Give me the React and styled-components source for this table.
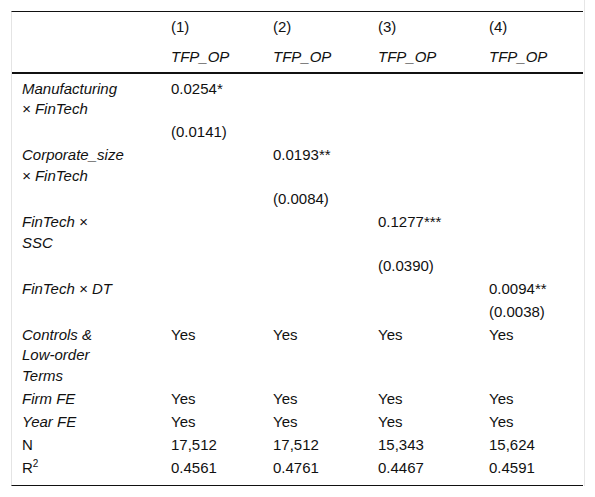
import React from 'react';
import styled, { createGlobalStyle } from 'styled-components';

const GlobalStyle = createGlobalStyle`
  html, body {
    margin: 0;
    padding: 0;
    background: #fff;
  }
  body {
    font-family: "Liberation Sans", Arial, sans-serif;
    color: #111;
  }
`;

const Frame = styled.div`
  box-sizing: border-box;
  width: 585px;
  height: 486px;
  padding: 11px 0 0 11px;
  border-right: 1px solid #e6e6e6;
`;

const Table = styled.table`
  width: 572px;
  table-layout: fixed;
  border-collapse: separate;
  border-spacing: 0;
  border-top: 1px solid #111;
  border-bottom: 1px solid #111;
  border-left: 1px solid #e4e4e4;
  font-size: 15px;
  line-height: 20.7px;
`;

const HeadCell = styled.th`
  text-align: left;
  font-weight: normal;
  font-style: ${(p) => (p.$italic ? 'italic' : 'normal')};
  padding: 4.65px 10px 4.65px 11px;
  border-bottom: ${(p) => (p.$rule ? '2px solid #111' : 'none')};
`;

const Cell = styled.td`
  vertical-align: top;
  text-align: left;
  font-style: ${(p) => (p.$italic ? 'italic' : 'normal')};
  padding: ${(p) => (p.$first ? '4.65px' : '1.15px')} 10px
    ${(p) => (p.$last ? '6.15px' : '1.15px')} ${(p) => (p.$label ? '10px' : '11px')};
  white-space: nowrap;
`;

const Sup = styled.sup`
  font-size: 10px;
  line-height: 0;
  vertical-align: 6px;
`;

const columns = [148, 102, 105, 111, 105];

const rows = [
  { label: ['Manufacturing', '× FinTech'], italic: true, values: ['0.0254*', '', '', ''] },
  { label: [''], values: ['(0.0141)', '', '', ''] },
  { label: ['Corporate_size', '× FinTech'], italic: true, values: ['', '0.0193**', '', ''] },
  { label: [''], values: ['', '(0.0084)', '', ''] },
  { label: ['FinTech ×', 'SSC'], italic: true, values: ['', '', '0.1277***', ''] },
  { label: [''], values: ['', '', '(0.0390)', ''] },
  { label: ['FinTech × DT'], italic: true, values: ['', '', '', '0.0094**'] },
  { label: [''], values: ['', '', '', '(0.0038)'] },
  { label: ['Controls &', 'Low-order', 'Terms'], italic: true, values: ['Yes', 'Yes', 'Yes', 'Yes'] },
  { label: ['Firm FE'], italic: true, values: ['Yes', 'Yes', 'Yes', 'Yes'] },
  { label: ['Year FE'], italic: true, values: ['Yes', 'Yes', 'Yes', 'Yes'] },
  { label: ['N'], values: ['17,512', '17,512', '15,343', '15,624'] },
  { label: ['R', <Sup key="s">2</Sup>], inline: true, values: ['0.4561', '0.4761', '0.4467', '0.4591'] },
];

const Label = ({ row }) => {
  if (row.inline) return <>{row.label}</>;
  return row.label.map((line, i) => (
    <React.Fragment key={i}>
      {i > 0 && <br />}
      {line}
    </React.Fragment>
  ));
};

const App = () => (
  <>
    <GlobalStyle />
    <Frame>
      <Table>
        <colgroup>
          {columns.map((w, i) => (
            <col key={i} style={{ width: w }} />
          ))}
        </colgroup>
        <thead>
          <tr>
            <HeadCell />
            {['(1)', '(2)', '(3)', '(4)'].map((h) => (
              <HeadCell key={h}>{h}</HeadCell>
            ))}
          </tr>
          <tr>
            <HeadCell $rule />
            {[1, 2, 3, 4].map((n) => (
              <HeadCell key={n} $rule $italic>
                TFP_OP
              </HeadCell>
            ))}
          </tr>
        </thead>
        <tbody>
          {rows.map((row, r) => {
            const first = r === 0;
            const last = r === rows.length - 1;
            return (
              <tr key={r}>
                <Cell $label $italic={row.italic} $first={first} $last={last}>
                  <Label row={row} />
                </Cell>
                {row.values.map((v, c) => (
                  <Cell key={c} $first={first} $last={last}>
                    {v}
                  </Cell>
                ))}
              </tr>
            );
          })}
        </tbody>
      </Table>
    </Frame>
  </>
);

export default App;
